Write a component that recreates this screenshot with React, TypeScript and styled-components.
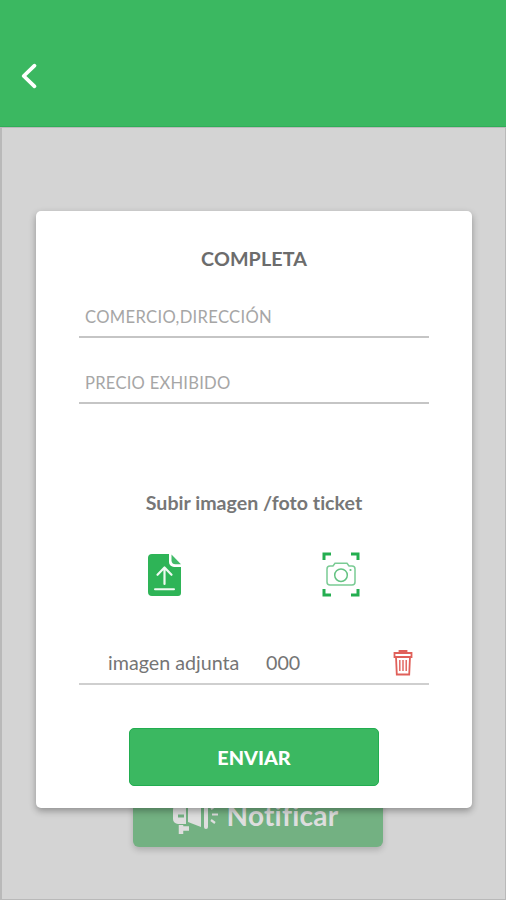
import React from 'react';
import styled, { createGlobalStyle } from 'styled-components';

const GlobalStyle = createGlobalStyle`
  * { box-sizing: border-box; }
  body { margin: 0; font-family: Lato, "Open Sans", sans-serif; font-variant-ligatures: none; }
`;

const Screen = styled.div`
  position: relative;
  display: flex;
  flex-direction: column;
  width: 506px;
  height: 900px;
  overflow: hidden;
`;

const Header = styled.header`
  display: flex;
  align-items: center;
  flex: 0 0 127px;
  padding: 25px 0 0 20px;
  background: #3bb861;
  border-bottom: 1px solid #2fae58;
`;

const BackButton = styled.button`
  display: flex;
  padding: 0;
  border: 0;
  background: none;
`;

const Backdrop = styled.main`
  display: flex;
  flex: 1;
  flex-direction: column;
  align-items: center;
  justify-content: flex-end;
  padding: 0 0 52px 8px;
  background: #d4d4d4;
  border: 1px solid #b9b9b9;
  border-left-width: 2px;
`;

const NotifyButton = styled.button`
  display: flex;
  align-items: center;
  gap: 5px;
  width: 250px;
  height: 58px;
  padding: 0 0 6px 39px;
  border: 0;
  border-radius: 6px;
  background: #73b182;
  box-shadow: 0 3px 6px rgba(0, 0, 0, 0.18);
  color: #dedede;
  font: 700 28px Lato, sans-serif;
  font-variant-ligatures: none;
  letter-spacing: 0.25px;
`;

const Dialog = styled.section`
  position: absolute;
  top: 211px;
  left: 36px;
  display: flex;
  flex-direction: column;
  align-items: center;
  width: 435.5px;
  height: 596.5px;
  padding: 36px 42.5px 0 43px;
  border-radius: 5px;
  background: #fff;
  box-shadow: 0 3px 7px rgba(0, 0, 0, 0.32);
`;

const Title = styled.h1`
  margin: 0 0 1px;
  color: #6c6c6c;
  font-size: 19.7px;
  font-weight: 700;
  line-height: 24px;
  letter-spacing: 0.1px;
`;

const Field = styled.label`
  display: flex;
  align-items: center;
  width: 100%;
  height: 66px;
  padding: 26px 0 0 6px;
  border-bottom: 2px solid #c5c5c5;
  color: #a6a6a6;
`;

const FieldText = styled.span<{ $tracking: number }>`
  font-size: 16.6px;
  line-height: 20px;
  letter-spacing: ${({ $tracking }) => $tracking}px;
  white-space: nowrap;
`;

const UploadTitle = styled.h2`
  margin: 87px 0 0;
  color: #777;
  font-size: 19.6px;
  font-weight: 700;
  line-height: 24px;
`;

const UploadActions = styled.div`
  display: flex;
  justify-content: space-between;
  width: 100%;
  height: 46px;
  margin-top: 37px;
  padding: 0 69px 0 68px;
`;

const IconButton = styled.button`
  display: flex;
  padding: 0;
  border: 0;
  background: none;
`;

const Attachment = styled.div`
  display: flex;
  align-items: center;
  width: 100%;
  height: 46px;
  margin-top: 41px;
  padding: 3px 16px 0 29px;
  border-bottom: 2px solid #cfcfcf;
  color: #757575;
  font-size: 19.7px;
  line-height: 24px;
`;

const FileLabel = styled.span`
  width: 158px;
  white-space: nowrap;
`;

const FileName = styled.span`
  flex: 1;
`;

const SendButton = styled.button`
  width: 250px;
  height: 58px;
  margin-top: 43px;
  padding: 0 0 1px;
  border: 1px solid #22ad50;
  border-radius: 5px;
  background: #3bb861;
  color: #fff;
  font: 900 19.8px Lato, sans-serif;
`;

const BackIcon = () => (
  <svg width="18" height="28" viewBox="0 0 18 28" fill="none">
    <path d="M14.5 3.7 3.7 14l10.8 10.3" stroke="#fff" strokeWidth="3.8" strokeLinecap="round" strokeLinejoin="round" />
  </svg>
);

const FileUploadIcon = () => (
  <svg width="36" height="46" viewBox="0 0 36 46" fill="none">
    <path d="M5 2h17v8a5 5 0 0 0 5 5h7v26a3 3 0 0 1-3 3H5a4 4 0 0 1-4-4V6a4 4 0 0 1 4-4Z" fill="#2eb457" />
    <path d="M24.5 2.5 34 12.3h-5.5a4 4 0 0 1-4-4Z" fill="#42bb69" />
    <path d="M17.5 32V16M10.5 22.8l7-7.3 7 7.3" stroke="#effaf2" strokeWidth="2.2" strokeLinecap="round" strokeLinejoin="round" />
    <path d="M8 37.2h19" stroke="#effaf2" strokeWidth="2" strokeLinecap="round" />
  </svg>
);

const CameraIcon = () => (
  <svg width="38" height="46" viewBox="0 0 38 46" fill="none">
    <path d="M2 8V2h7M29 2h7v6M2 37v6h7M29 43h7v-6" stroke="#24ae50" strokeWidth="3" />
    <path d="M8 14h3l2-2.7h12l2 2.7h3a3 3 0 0 1 3 3v13a3 3 0 0 1-3 3H8a3 3 0 0 1-3-3V17a3 3 0 0 1 3-3Z" stroke="#7acb94" strokeWidth="1.5" />
    <circle cx="19" cy="23.2" r="6.3" stroke="#65c383" strokeWidth="1.5" />
    <circle cx="28.5" cy="18" r="1.1" fill="#65c383" />
  </svg>
);

const TrashIcon = () => (
  <svg width="20" height="28" viewBox="0 0 20 28" fill="none" stroke="#e0605a" strokeWidth="1.8">
    <path d="M6.5 4V2h7v2M1.5 4h17v4h-17ZM3 8l.8 17.5h12.4L17 8" />
    <path d="M6.8 11v11M10 11v11M13.2 11v11" strokeWidth="1.4" />
  </svg>
);

const MegaphoneIcon = () => (
  <svg width="50" height="44" viewBox="0 0 50 44" fill="none">
    <path d="M5 12h9v19H6a5 5 0 0 1-5-5v-9a5 5 0 0 1 4-5Z" fill="#dedede" />
    <path d="M6 23h6" stroke="#73b182" strokeWidth="3" />
    <path d="M16 13 29 5v29l-13-5Z" fill="#dedede" />
    <path d="M34 4v30" stroke="#dedede" strokeWidth="4" strokeLinecap="round" />
    <path d="M9 32v9M9 35.5h8" stroke="#dedede" strokeWidth="4.5" />
    <path d="m39 16 4-3M40 21.5h6M39 27l4 3" stroke="#dedede" strokeWidth="2.2" />
  </svg>
);

export default function App() {
  return (
    <>
      <GlobalStyle />
      <Screen>
        <Header>
          <BackButton aria-label="Volver"><BackIcon /></BackButton>
        </Header>
        <Backdrop>
          <NotifyButton><MegaphoneIcon />Notificar</NotifyButton>
        </Backdrop>
        <Dialog>
          <Title>COMPLETA</Title>
          <Field><FieldText $tracking={0.32}>COMERCIO,DIRECCIÓN</FieldText></Field>
          <Field><FieldText $tracking={0.24}>PRECIO EXHIBIDO</FieldText></Field>
          <UploadTitle>Subir imagen /foto ticket</UploadTitle>
          <UploadActions>
            <IconButton aria-label="Subir archivo"><FileUploadIcon /></IconButton>
            <IconButton aria-label="Tomar foto"><CameraIcon /></IconButton>
          </UploadActions>
          <Attachment>
            <FileLabel>imagen adjunta</FileLabel>
            <FileName>000</FileName>
            <IconButton aria-label="Eliminar"><TrashIcon /></IconButton>
          </Attachment>
          <SendButton>ENVIAR</SendButton>
        </Dialog>
      </Screen>
    </>
  );
}
